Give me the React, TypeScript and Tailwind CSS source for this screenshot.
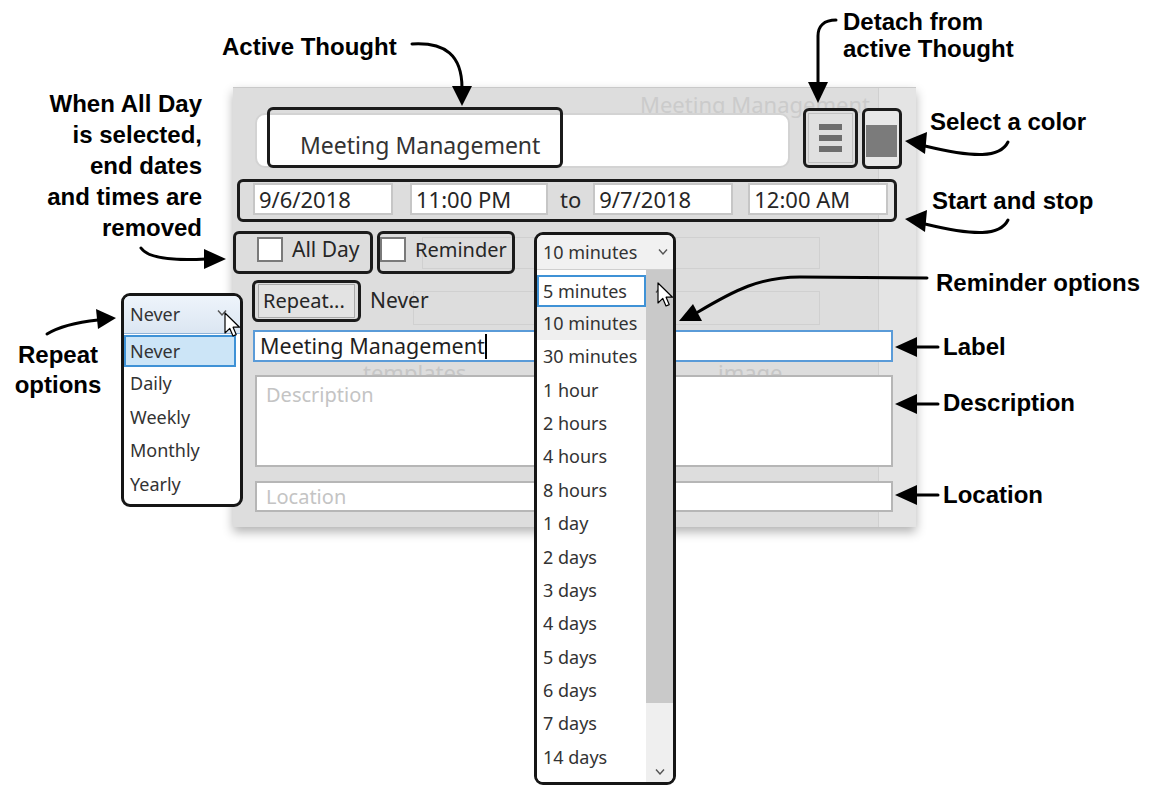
// Annotated screenshot of the Thought event editor

const ANN = "font-['Liberation_Sans',Arial,sans-serif] font-bold text-[24px] text-black whitespace-nowrap";
const UI = "font-['Noto_Sans','Open_Sans',sans-serif]";
const BOX = "border-[3px] border-[#1b1b1b] rounded-[6px]";

const reminderItems = [
  "30 minutes",
  "1 hour",
  "2 hours",
  "4 hours",
  "8 hours",
  "1 day",
  "2 days",
  "3 days",
  "4 days",
  "5 days",
  "6 days",
  "7 days",
  "14 days",
];

function Chevron({ up = false, className = "" }: { up?: boolean; className?: string }) {
  return (
    <svg width="10" height="6" viewBox="0 0 10 6" className={className}>
      <path d={up ? "M1 5.5 L5 1 L9 5.5" : "M1 0.5 L5 5 L9 0.5"} fill="none" stroke="#555" strokeWidth="1.4" />
    </svg>
  );
}

function Cursor({ className = "" }: { className?: string }) {
  return (
    <svg width="17" height="27" viewBox="0 0 17 27" className={className}>
      <path
        d="M1 1 L1 21 L5.8 16.4 L9 24 L12.2 22.6 L9.1 15.2 L15.5 15.2 Z"
        fill="white"
        stroke="black"
        strokeWidth="1.2"
        strokeLinejoin="round"
      />
    </svg>
  );
}

function Field({ className = "", children }: { className?: string; children: string }) {
  return (
    <div className={`h-[32px] border-2 border-[#c6c6c6] bg-white flex items-center pl-[4px] ${className}`}>
      {children}
    </div>
  );
}

function Arrows() {
  return (
    <svg className="absolute inset-0 pointer-events-none" width="1165" height="788">
      <g fill="none" stroke="#000" strokeWidth="3" strokeLinecap="round">
        <path d="M412 44 C445 42 462 55 462 88" />
        <path d="M836 20 C824 20 818 26 818 36 L818 84" />
        <path d="M1008 142 C1000 158 975 158 925 146" />
        <path d="M1008 220 C1000 236 975 236 925 224" />
        <path d="M141 248 C148 258 170 261 206 259" />
        <path d="M47 334 C60 326 80 322 98 320" />
        <path d="M927 278 L800 277 C760 277 735 290 698 312" />
        <path d="M938 347 L914 347" />
        <path d="M938 404 L914 404" />
        <path d="M938 495 L914 495" />
      </g>
      <g fill="#000">
        <polygon points="452,86 472,86 462,106" />
        <polygon points="808,82 828,82 818,103" />
        <polygon points="905,141 927,132 925,154" />
        <polygon points="905,219 927,210 925,232" />
        <polygon points="226,259 204,249 204,269" />
        <polygon points="116,318 96,309 98,329" />
        <polygon points="679,321 693,304 702,321" />
        <polygon points="895,347 917,337 917,357" />
        <polygon points="895,404 917,394 917,414" />
        <polygon points="895,495 917,485 917,505" />
      </g>
    </svg>
  );
}

export default function App() {
  return (
    <div className="relative w-[1165px] h-[788px] bg-white overflow-hidden">
      {/* editor window */}
      <div
        className={`absolute left-[233px] top-[87px] w-[683px] h-[440px] bg-[#dddddd] border-t border-[#c9c9c9] shadow-[0_5px_10px_rgba(0,0,0,0.3)] overflow-hidden ${UI} text-[#262626]`}
      >
        {/* faint window behind */}
        <div className="absolute left-[645px] top-0 w-[38px] h-full bg-[#e4e4e4] border-l border-[#d0d0d0]" />
        <div className="absolute left-[407px] top-[1px] text-[22px] leading-[30px] text-[#cbcbcb] whitespace-nowrap">
          Meeting Management
        </div>
        <div className="absolute left-[189px] top-[149px] w-[398px] h-[32px] border border-[#d0d0d0]" />
        <div className="absolute left-[180px] top-[203px] w-[407px] h-[34px] border border-[#d0d0d0]" />
        <div className="absolute left-[130px] top-[269px] text-[22px] leading-[30px] text-[#c6c6c6]">templates</div>
        <div className="absolute left-[485px] top-[269px] text-[22px] leading-[30px] text-[#c6c6c6]">image</div>

        <div className="relative flex flex-col">
          {/* title row */}
          <div className="flex mt-[19px] h-[62px]">
            <div className="mt-[6px] ml-[22px] w-[535px] h-[55px] rounded-[10px] border-2 border-[#d3d3d3] bg-white flex">
              <div
                className={`-mt-[8px] ml-[10px] w-[296px] h-[61px] ${BOX} flex items-center pl-[30px] pt-[15px] text-[23px] text-[#333]`}
              >
                Meeting Management
              </div>
            </div>
            <div className={`mt-[1px] ml-[13px] w-[55px] h-[60px] ${BOX} bg-[#dddddd] p-[2px]`}>
              <div className="w-full h-full bg-[#e0e0e0] border border-[#c2c2c2] flex flex-col items-center justify-center gap-[5px]">
                <div className="w-[23px] h-[6px] bg-[#6e6e6e]" />
                <div className="w-[23px] h-[6px] bg-[#6e6e6e]" />
                <div className="w-[23px] h-[6px] bg-[#6e6e6e]" />
              </div>
            </div>
            <div className={`mt-[1px] ml-[4px] w-[40px] h-[61px] ${BOX} bg-[#e8e8e8] pt-[14px] pl-[1px]`}>
              <div className="w-[31px] h-[32px] bg-[#7b7b7b]" />
            </div>
          </div>

          {/* start / stop row */}
          <div className={`mt-[10px] ml-[4px] w-[660px] h-[43px] ${BOX} flex items-start pt-[1px] text-[22px]`}>
            <Field className="ml-[13px] w-[140px]">9/6/2018</Field>
            <Field className="ml-[17px] w-[138px]">11:00 PM</Field>
            <span className="ml-[12px] leading-[32px]">to</span>
            <Field className="ml-[12px] w-[140px]">9/7/2018</Field>
            <Field className="ml-[15px] w-[140px]">12:00 AM</Field>
          </div>

          {/* checkbox row */}
          <div className="mt-[9px] flex h-[43px] text-[21px]">
            <div className={`w-[140px] h-[43px] ${BOX} flex items-start pt-[3px]`}>
              <div className="ml-[21px] w-[26px] h-[25px] border-2 border-[#7a7a7a] bg-white" />
              <span className="ml-[9px] leading-[25px]">All Day</span>
            </div>
            <div className={`ml-[4px] w-[138px] h-[43px] ${BOX} flex items-start pt-[3px]`}>
              <div className="w-[26px] h-[25px] border-2 border-[#7a7a7a] bg-white" />
              <span className="ml-[9px] leading-[25px] text-[20px]">Reminder</span>
            </div>
          </div>

          {/* repeat row */}
          <div className="mt-[6px] flex items-center h-[42px]">
            <div className={`ml-[19px] w-[109px] h-[42px] ${BOX} pl-[3px] pt-[1px]`}>
              <div className="w-[97px] h-[34px] bg-[#e3e3e3] border border-[#a9a9a9] flex items-center pl-[4px] text-[20px]">
                Repeat...
              </div>
            </div>
            <span className="ml-[9px] text-[21px]">Never</span>
          </div>

          {/* label */}
          <div className="mt-[8px] ml-[20px] w-[640px] h-[32px] border-2 border-[#5a9bd8] bg-white flex items-center pl-[5px] text-[21.5px] text-[#1f1f1f]">
            Meeting Management
            <span className="inline-block w-[2px] h-[25px] bg-black" />
          </div>

          {/* description */}
          <div className="mt-[13px] ml-[22px] w-[638px] h-[92px] border-2 border-[#b6b6b6] bg-white pl-[9px] pt-[3px] text-[20px] leading-[30px] text-[#c4c4c4]">
            Description
          </div>

          {/* location */}
          <div className="mt-[14px] ml-[22px] w-[638px] h-[31px] border-2 border-[#b6b6b6] bg-white flex items-center pl-[9px] text-[20px] text-[#c4c4c4]">
            Location
          </div>
        </div>
      </div>

      {/* repeat dropdown */}
      <div
        className={`absolute left-[121px] top-[293px] w-[122px] h-[214px] border-[3px] border-[#161616] rounded-[9px] bg-white overflow-hidden ${UI} text-[18px] text-[#333]`}
      >
        <div className="relative h-[38px] bg-gradient-to-b from-[#eef4fb] to-[#dbe6f2] border-b border-[#8fb3d9] flex items-center pl-[6px]">
          Never
          <Chevron className="absolute left-[93px] top-[14px]" />
        </div>
        <div className="mt-[1px] mr-[4px] h-[32px] bg-[#cce5f7] border-2 border-[#3f92d6] flex items-center pl-[4px]">
          Never
        </div>
        {["Daily", "Weekly", "Monthly", "Yearly"].map((t) => (
          <div key={t} className="h-[33.5px] flex items-center pl-[6px]">
            {t}
          </div>
        ))}
      </div>

      {/* reminder dropdown */}
      <div
        className={`absolute left-[534px] top-[232px] w-[142px] h-[553px] border-[3px] border-[#161616] rounded-[9px] bg-white overflow-hidden flex flex-col ${UI} text-[18px] text-[#333]`}
      >
        <div className="relative h-[35px] shrink-0 bg-[#f1f1f1] border-b border-[#cfcfcf] flex items-center pl-[6px]">
          10 minutes
          <Chevron className="absolute left-[121px] top-[14px]" />
        </div>
        <div className="flex flex-1">
          <div className="w-[109px] pt-[5px] bg-white">
            <div className="h-[32px] border-2 border-[#3f92d6] flex items-center pl-[4px]">5 minutes</div>
            <div className="h-[33px] bg-[#efefef] flex items-center pl-[6px]">10 minutes</div>
            {reminderItems.map((t) => (
              <div key={t} className="h-[33.4px] flex items-center pl-[6px]">
                {t}
              </div>
            ))}
          </div>
          <div className="w-[27px] flex flex-col">
            <div className="relative h-[433px] bg-[#c9c9c9]">
              <Chevron up className="absolute left-[9px] top-[17px]" />
            </div>
            <div className="relative flex-1 bg-[#efefef]">
              <Chevron className="absolute left-[9px] bottom-[7px]" />
            </div>
          </div>
        </div>
      </div>

      {/* annotations */}
      <div className={`absolute left-[222px] top-[33px] leading-[28px] ${ANN}`}>Active Thought</div>
      <div className={`absolute left-[843px] top-[8px] leading-[27px] ${ANN}`}>
        Detach from
        <br />
        active Thought
      </div>
      <div className={`absolute left-[930px] top-[108px] leading-[28px] ${ANN}`}>Select a color</div>
      <div className={`absolute left-[932px] top-[187px] leading-[28px] ${ANN}`}>Start and stop</div>
      <div className={`absolute left-0 w-[202px] top-[88px] leading-[31px] text-right ${ANN}`}>
        When All Day
        <br />
        is selected,
        <br />
        end dates
        <br />
        and times are
        <br />
        removed
      </div>
      <div className={`absolute left-[10px] w-[96px] top-[340px] leading-[30px] text-center ${ANN}`}>
        Repeat
        <br />
        options
      </div>
      <div className={`absolute left-[936px] top-[269px] leading-[28px] ${ANN}`}>Reminder options</div>
      <div className={`absolute left-[943px] top-[333px] leading-[28px] ${ANN}`}>Label</div>
      <div className={`absolute left-[943px] top-[389px] leading-[28px] ${ANN}`}>Description</div>
      <div className={`absolute left-[943px] top-[481px] leading-[28px] ${ANN}`}>Location</div>

      <Arrows />

      <Cursor className="absolute left-[657px] top-[282px]" />
      <Cursor className="absolute left-[224px] top-[312px]" />
    </div>
  );
}
